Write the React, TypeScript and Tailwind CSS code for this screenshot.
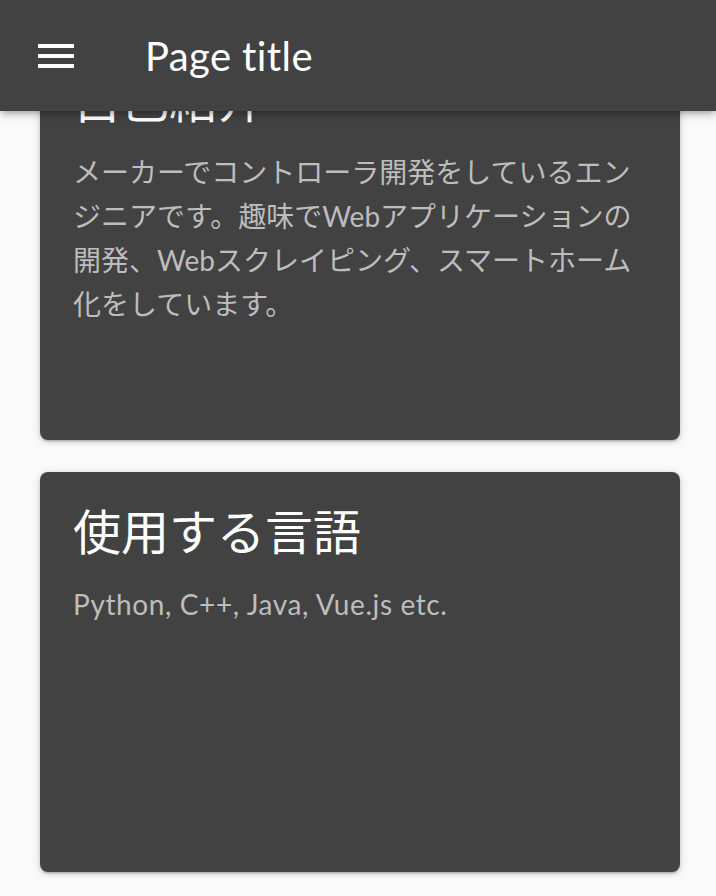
import React from "react";

const font = { fontFamily: '"Lato", "Noto Sans CJK JP", sans-serif' };

function MenuIcon() {
  return (
    <svg width="48" height="48" viewBox="0 0 24 24" fill="#ffffff">
      <path d="M3 18h18v-2H3v2zm0-5h18v-2H3v2zm0-7v2h18V6H3z" />
    </svg>
  );
}

function Card({ title, children }: { title: string; children: React.ReactNode }) {
  return (
    <div className="h-[400px] rounded-[8px] bg-[#424242] px-[33px] pt-[32px] shadow-[0_3px_2px_-2px_rgba(0,0,0,0.2),0_2px_4px_0_rgba(0,0,0,0.14),0_1px_10px_0_rgba(0,0,0,0.12)]">
      <h2 className="text-[48px] leading-[56px] text-white">{title}</h2>
      <p className="mt-[22px] text-[28px] leading-[44px] text-[#bdbdbd]">{children}</p>
    </div>
  );
}

export default function App() {
  return (
    <div className="relative h-[896px] overflow-hidden bg-[#fafafa]" style={font}>
      <header className="absolute inset-x-0 top-0 z-10 flex h-[111px] items-center bg-[#424242] shadow-[0_4px_6px_-2px_rgba(0,0,0,0.25),0_4px_10px_0_rgba(0,0,0,0.14)]">
        <button className="ml-[32px] flex h-[48px] w-[48px] items-center justify-center">
          <MenuIcon />
        </button>
        <h1 className="ml-[65px] text-[40px] leading-none tracking-[0.4px] text-white">Page title</h1>
      </header>
      <main className="flex flex-col gap-[32px] pl-[40px] pr-[36px] pt-[40px]">
        <Card title="自己紹介">
          メーカーでコントローラ開発をしているエン
          <br />
          ジニアです。趣味でWebアプリケーションの
          <br />
          開発、Webスクレイピング、スマートホーム
          <br />
          化をしています。
        </Card>
        <Card title="使用する言語">
          <span className="tracking-[0.6px]">Python, C++, Java, Vue.js etc.</span>
        </Card>
      </main>
    </div>
  );
}
